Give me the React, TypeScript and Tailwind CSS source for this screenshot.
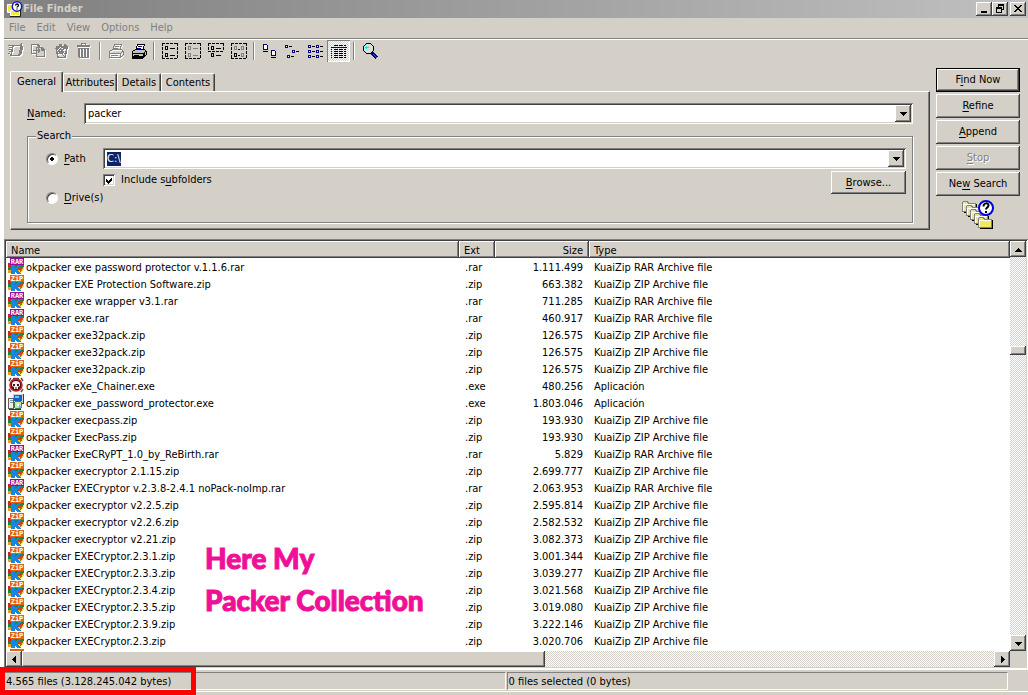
/**
 * File Finder
 * Classic search dialog with a toolbar, search form and result list
 */

import React, { useEffect, useRef } from 'react';
import { clsx } from 'clsx';

const raised = 'bg-[#d4d0c8] shadow-[inset_-1px_-1px_#404040,inset_1px_1px_#fff,inset_-2px_-2px_#808080]';
const sunken = 'shadow-[inset_1px_1px_#808080,inset_-1px_-1px_#fff,inset_2px_2px_#404040,inset_-2px_-2px_#d4d0c8]';
const checker =
  'bg-[conic-gradient(#fff_25%,#d4d0c8_0_50%,#fff_0_75%,#d4d0c8_0)] bg-[length:2px_2px]';

type FileKind = 'rar' | 'zip' | 'skull' | 'setup';

interface FileRow {
  name: string;
  size: string;
  kind: FileKind;
}

const files: FileRow[] = [
  { name: 'okpacker exe password protector v.1.1.6.rar', size: '1.111.499', kind: 'rar' },
  { name: 'okpacker EXE Protection Software.zip', size: '663.382', kind: 'zip' },
  { name: 'okpacker exe wrapper v3.1.rar', size: '711.285', kind: 'rar' },
  { name: 'okpacker exe.rar', size: '460.917', kind: 'rar' },
  { name: 'okpacker exe32pack.zip', size: '126.575', kind: 'zip' },
  { name: 'okpacker exe32pack.zip', size: '126.575', kind: 'zip' },
  { name: 'okpacker exe32pack.zip', size: '126.575', kind: 'zip' },
  { name: 'okPacker eXe_Chainer.exe', size: '480.256', kind: 'skull' },
  { name: 'okpacker exe_password_protector.exe', size: '1.803.046', kind: 'setup' },
  { name: 'okpacker execpass.zip', size: '193.930', kind: 'zip' },
  { name: 'okpacker ExecPass.zip', size: '193.930', kind: 'zip' },
  { name: 'okPacker ExeCRyPT_1.0_by_ReBirth.rar', size: '5.829', kind: 'rar' },
  { name: 'okpacker execryptor 2.1.15.zip', size: '2.699.777', kind: 'zip' },
  { name: 'okPacker EXECryptor v.2.3.8-2.4.1 noPack-noImp.rar', size: '2.063.953', kind: 'rar' },
  { name: 'okpacker execryptor v2.2.5.zip', size: '2.595.814', kind: 'zip' },
  { name: 'okpacker execryptor v2.2.6.zip', size: '2.582.532', kind: 'zip' },
  { name: 'okpacker execryptor v2.21.zip', size: '3.082.373', kind: 'zip' },
  { name: 'okpacker EXECryptor.2.3.1.zip', size: '3.001.344', kind: 'zip' },
  { name: 'okpacker EXECryptor.2.3.3.zip', size: '3.039.277', kind: 'zip' },
  { name: 'okpacker EXECryptor.2.3.4.zip', size: '3.021.568', kind: 'zip' },
  { name: 'okpacker EXECryptor.2.3.5.zip', size: '3.019.080', kind: 'zip' },
  { name: 'okpacker EXECryptor.2.3.9.zip', size: '3.222.146', kind: 'zip' },
  { name: 'okpacker EXECryptor.2.3.zip', size: '3.020.706', kind: 'zip' },
];

const typeNames: Record<FileKind, string> = {
  rar: 'KuaiZip RAR Archive file',
  zip: 'KuaiZip ZIP Archive file',
  skull: 'Aplicación',
  setup: 'Aplicación',
};

/**
 * Icons
 */
interface IconProps {
  children: React.ReactNode;
  size?: number;
  smooth?: boolean;
}

function Icon({ children, size = 16, smooth = false }: IconProps) {
  return (
    <svg
      width={size}
      height={size}
      viewBox={`0 0 ${size} ${size}`}
      fill="none"
      className="block shrink-0"
      shapeRendering={smooth ? 'auto' : 'crispEdges'}
      aria-hidden="true"
    >
      {children}
    </svg>
  );
}

// Grey drawing with a white copy one pixel down and to the right
function Etched({ children }: { children: React.ReactNode }) {
  return (
    <Icon>
      <g transform="translate(1 1)" className="text-white">{children}</g>
      <g className="text-[#808080]">{children}</g>
    </Icon>
  );
}

interface ArchiveIconProps {
  kind: 'rar' | 'zip';
  label?: string;
}

function ArchiveIcon({ kind, label }: ArchiveIconProps) {
  return (
    <Icon>
      <path d="M0 5h5v4H0z" fill="#c8281e" />
      <path d="M0 9h5v3H0z" fill="#168a36" />
      <path d="M0 12h4v3H0z" fill="#e8a020" />
      <path d="M7 7h9v2H7z" fill="#168a36" />
      <path d="M7 9h8v3H7z" fill="#d43a1c" />
      <path d="M10 12h5l-3 3h-2z" fill="#f5c42c" />
      <path d="M16 8v3l-4 5h-2v-2z" fill="#f8d850" />
      <path d="M15 10l-4 5" stroke="#a87810" />
      <path d="M3 7h4v3l3-3h3l-4 4 4 5H9l-2-3v3H3z" fill="#1686e0" />
      <path d="M2 0h14v7H2z" fill={kind === 'rar' ? '#9a0a94' : '#e4640e'} />
      {label && (
        <text
          x="9"
          y="6"
          textAnchor="middle"
          fill="#fff"
          className="font-['DejaVu_Sans_Mono'] text-[7px] font-bold"
        >
          {label}
        </text>
      )}
    </Icon>
  );
}

function SkullIcon() {
  return (
    <Icon smooth>
      <path d="M1 4l2-3M15 4l-2-3M1 12l2 3M15 12l-2 3M5 1.500h6" stroke="#555" strokeWidth="1.500" />
      <circle cx="8" cy="8" r="6" fill="#5b1018" stroke="#c81e28" strokeWidth="1.500" />
      <path d="M4 7c0-4 8-4 8 0v2l-2 1v2H6v-2L4 9z" fill="#f4f0f0" />
      <path d="M5 7h2v2H5zM9 7h2v2H9zM7.500 10h1v2h-1z" fill="#431018" />
    </Icon>
  );
}

function SetupIcon() {
  return (
    <Icon>
      <path d="M5 0h11v9H5z" fill="#d0d0d0" />
      <path d="M6 1h8v6H6z" fill="#1464c8" />
      <path d="M7 2h4v2H7z" fill="#68c8f8" />
      <path d="M15.500 0v9.500H6" stroke="#404040" />
      <path d="M.5 4.500h5v10h-5z" fill="#eee" stroke="#606060" />
      <path d="M2 6.500h3M2 8.500h3" stroke="#909090" />
      <circle cx="10" cy="11" r="4" fill="#b8e8b0" stroke="#388048" />
      <path d="M7 9l3 2 1-3z" fill="#f0f060" />
      <path d="M10 11l4 1-2 3z" fill="#58b8e8" />
      <path d="M9 10h2v2H9z" fill="#fff" />
      <path d="M1 15.500h12" stroke="#303030" />
    </Icon>
  );
}

function FileIcon({ kind }: { kind: FileKind }) {
  if (kind === 'skull') return <SkullIcon />;
  if (kind === 'setup') return <SetupIcon />;
  return <ArchiveIcon kind={kind} label={kind === 'rar' ? 'RAR' : 'ZiP'} />;
}

function AppIcon() {
  return (
    <Icon smooth>
      <path d="M.5 3.500h6v8h-6z" fill="#f4e840" stroke="#fff" />
      <path d="M3.500 9.500h9v5h-9z" fill="#f4e840" stroke="#fff" />
      <path d="M13.500 9v6.500H3" stroke="#202020" />
      <circle cx="10" cy="5.500" r="4.700" fill="#fff" stroke="#1414c8" strokeWidth="1.500" />
      <path d="M8.500 4.500c0-2 3-2 3 0 0 1-1.500 1-1.500 2M10 7.500v1" stroke="#000" strokeWidth="1.300" />
    </Icon>
  );
}

function FoldersIcon() {
  return (
    <Icon size={32}>
      {[0, 4, 8, 12, 16].map((d) => (
        <g key={d} transform={`translate(${d} ${d})`}>
          <path d="M2 12.500h12.500V4" stroke="#000" />
          <path d="M.5 11.500v-9l1-1h4l1 2h7v8z" fill={d === 16 ? '#efe860' : '#e8e4a0'} stroke="#808080" />
          <path d="M1.500 11v-6.500h11" stroke="#fff" />
        </g>
      ))}
      <g shapeRendering="auto">
        <circle cx="24" cy="8" r="7" fill="#fff" stroke="#0000e0" strokeWidth="2" />
        <path d="M21.500 6.500c0-4 5-4 5-1 0 2-2.500 2-2.500 4M24 11v2" stroke="#000" strokeWidth="2" />
      </g>
    </Icon>
  );
}

const openIcon = (
  <Etched>
    <path d="M4 2.500h8l1-1v2l-2 9H3L5 3M12.500 3.500h2l-2 9" stroke="currentColor" strokeWidth="1.500" />
    <path d="M0 2.500h4M1 4.500h3M0 6.500h3M1 8.500h2M0 10.500h2" stroke="currentColor" />
  </Etched>
);

const copyIcon = (
  <Etched>
    <path d="M.5 1.500h6l2 2v7h-8z" stroke="currentColor" strokeWidth="1.500" />
    <path d="M5.500 4.500h5l3 3v6h-8z" fill="#d4d0c8" stroke="currentColor" strokeWidth="1.500" />
    <path d="M10.500 4v3.500h3M2 7.500h7M7.500 5v5M8.500 6v3" stroke="currentColor" />
  </Etched>
);

const recycleIcon = (
  <Etched>
    <path d="M2 4.500l2 10h7l2-10" stroke="currentColor" strokeWidth="1.500" />
    <path d="M2 5l8 8M5 4l6 7M11 5l-8 7M8 4l-5 6" stroke="currentColor" />
    <path d="M2 3h3V1h3v2h2V1h2l2 3-2 2H9L7 4 4 6H2zM5 8h4v3H5z" fill="currentColor" />
  </Etched>
);

const trashIcon = (
  <Etched>
    <path d="M0 2h4V0h5v2h4v2H0zM5 1v1h3V1z" fill="currentColor" fillRule="evenodd" />
    <path d="M1 5h11v9l-1 1H2l-1-1zM3 6v8h1V6zM6 6v8h1V6zM9 6v8h1V6z" fill="currentColor" fillRule="evenodd" />
  </Etched>
);

const printerShape = 'M4.500 7.500l2-6h7l-2 6M1.500 8.500l3-2h9l2 2v3l-3 3h-11zM1 10.500h11l3-2M12.500 11v3M3 12.500h7M7 3.500h4M6 5.500h4';

const printerOffIcon = (
  <Etched>
    <path d={printerShape} stroke="currentColor" />
  </Etched>
);

const printerIcon = (
  <Icon>
    <path d="M4 7l2-6h8l-2 6z" fill="#fff" />
    <path d="M1 9l3-2h10l2 2v3l-3 3H1z" fill="#c0c0c0" />
    <path d={printerShape} stroke="#000" />
    <path d="M1 13.500h11M13.500 9v4M1 15.500h11" stroke="#000" />
    <path d="M8 3.500h3M7 5.500h3" stroke="#0000a0" />
    <path d="M8 12.500h3" stroke="#e0e000" />
  </Icon>
);

// Dashed selection frame with small file marks inside
function SelectIcon({ variant }: { variant: 'all' | 'none' | 'part' | 'invert' }) {
  const top = variant === 'none' || variant === 'invert' ? '#808080' : '#000';
  const bottom = variant === 'none' ? '#808080' : '#000';
  return (
    <Icon>
      <path
        d={variant === 'part' ? 'M0 .5h15M15.500 0v8M0 8.500h15M.5 0v8' : 'M0 .5h15M15.500 0v15M0 15.500h16M.5 0v15'}
        stroke="#000"
        strokeDasharray="3 1"
      />
      <path d="M3.500 3.500h2v3h-2z" stroke={top} />
      <path d="M3.500 10.500h2v3h-2z" stroke={bottom} />
      {variant === 'invert' ? (
        <>
          <path d="M10.500 3.500h2v3h-2z" stroke="#808080" />
          <path d="M10.500 10.500h2v3h-2z" stroke="#808080" />
          <path d="M7 6.500h2M7 12.500h2" stroke="#000" />
        </>
      ) : (
        <>
          <path d="M8 5.500h5" stroke={top} />
          <path d="M8 12.500h5" stroke={bottom} />
        </>
      )}
    </Icon>
  );
}

const largeIconsIcon = (
  <Icon>
    <path d="M1.500 1.500h3l1 1v4h-4zM9.500 7.500h3l1 1v4h-4z" fill="#fff" stroke="#000080" />
    <path d="M1 8.500h5M9 14.500h5" stroke="#000" />
  </Icon>
);

const smallIconsIcon = (
  <Icon>
    <path d="M.5 2.500h2v2h-2zM7.500 7.500h2v2h-2zM2.500 12.500h2v2h-2z" fill="#fff" stroke="#000080" />
    <path d="M4 3.500h3M11 8.500h3M6 13.500h3" stroke="#000" />
  </Icon>
);

const listIcon = (
  <Icon>
    <path
      d="M.5 2.500h2v2h-2zM8.500 2.500h2v2h-2zM.5 7.500h2v2h-2zM8.500 7.500h2v2h-2zM.5 12.500h2v2h-2zM8.500 12.500h2v2h-2z"
      fill="#fff"
      stroke="#000080"
    />
    <path d="M4 3.500h3M12 3.500h3M4 8.500h3M12 8.500h3M4 13.500h3M12 13.500h3" stroke="#000" />
  </Icon>
);

const detailsIcon = (
  <Icon>
    <path d="M3 2.500h12M3 6.500h12M3 8.500h12M3 10.500h12M3 12.500h12M3 14.500h12" stroke="#000" strokeDasharray="4 1" />
    <path d="M0 4.500h16" stroke="#000080" />
    <path d="M.5 6v10" stroke="#000080" strokeDasharray="1 1" />
  </Icon>
);

const searchIcon = (
  <Icon>
    <path d="M4.500.5h4l3 3v4l-3 3h-4l-3-3v-4z" fill="#dcdcd8" stroke="#000" />
    <path d="M3 4.500h4M4.500 3v3" stroke="#00e8f0" />
    <path d="M10 10l5 5" stroke="#000080" strokeWidth="3" />
    <path d="M11 11l4 4" stroke="#5050d0" />
  </Icon>
);

interface ArrowProps {
  dir: 'up' | 'down' | 'left' | 'right';
}

const arrowPaths = {
  up: 'M3 2h1v1h1v1h1v1h1v1H0V5h1V4h1V3h1z',
  down: 'M0 2h7v1H6v1H5v1H4v1H3V5H2V4H1V3H0z',
  left: 'M1 3h1V2h1V1h1V0h1v7H4V6H3V5H2V4H1z',
  right: 'M2 0h1v1h1v1h1v1h1v1H5v1H4v1H3v1H2z',
};

function Arrow({ dir }: ArrowProps) {
  return (
    <Icon size={7}>
      <path d={arrowPaths[dir]} fill="#000" />
    </Icon>
  );
}

/**
 * Title bar and menu
 */
function TitleBar() {
  const box = clsx('flex h-3.5 w-4 items-center justify-center', raised);
  return (
    <header className="flex h-[18px] items-center bg-linear-to-r from-[#808080] to-[#c0c0c0] pl-[3px] pr-0.5">
      <AppIcon />
      <h1 className="flex-1 text-[11px] font-bold leading-[18px] text-[#d4d0c8]">File Finder</h1>
      <button type="button" aria-label="Minimize" className={box}>
        <Icon size={10}><path d="M2 7h6v2H2z" fill="#000" /></Icon>
      </button>
      <button type="button" aria-label="Restore" className={box}>
        <Icon size={10}>
          <path d="M3 1h6M3 .5h6M3.500 0v4M8.500 0v6M7 5.500h2M1 3.500h6M1 4.500h6M1.500 4v5M6.500 4v5M1 8.500h6" stroke="#000" />
        </Icon>
      </button>
      <button type="button" aria-label="Close" className={clsx(box, 'ml-0.5')}>
        <Icon size={10}>
          <path d="M1 1h2v1h1v1h2V2h1V1h2v1H8v1H7v1H6v1h1v1h1v1h1v1H7V7H6V6H4v1H3v1H1V7h1V6h1V5h1V4H3V3H2V2H1z" fill="#000" />
        </Icon>
      </button>
    </header>
  );
}

function MenuBar() {
  return (
    <nav className="flex h-[21px] items-center gap-[11px] border-b border-[#808080] pl-[5px] text-[#808080]">
      {['File', 'Edit', 'View', 'Options', 'Help'].map((item) => (
        <button key={item} type="button" className="leading-4">{item}</button>
      ))}
    </nav>
  );
}

/**
 * Toolbar
 */
interface ToolProps {
  label: string;
  icon: React.ReactNode;
  pressed?: boolean;
}

function Tool({ label, icon, pressed }: ToolProps) {
  return (
    <button
      type="button"
      aria-label={label}
      aria-pressed={pressed}
      className={clsx(
        'flex h-[22px] w-[23px] items-center pl-1',
        pressed && checker,
        pressed && 'shadow-[inset_1px_1px_#808080,inset_-1px_-1px_#fff]'
      )}
    >
      {icon}
    </button>
  );
}

function Separator() {
  return <div className="mx-[3px] mt-0.5 h-[18px] w-0.5 border-l border-r border-l-[#808080] border-r-white" />;
}

function Toolbar() {
  return (
    <div className="flex h-6 items-start border-t border-white">
      <Tool label="Open" icon={openIcon} />
      <Tool label="Copy" icon={copyIcon} />
      <Tool label="Recycle" icon={recycleIcon} />
      <Tool label="Delete" icon={trashIcon} />
      <Separator />
      <Tool label="Print" icon={printerOffIcon} />
      <Tool label="Print list" icon={printerIcon} />
      <Separator />
      <Tool label="Select all" icon={<SelectIcon variant="all" />} />
      <Tool label="Select none" icon={<SelectIcon variant="none" />} />
      <Tool label="Select part" icon={<SelectIcon variant="part" />} />
      <Tool label="Invert selection" icon={<SelectIcon variant="invert" />} />
      <Separator />
      <Tool label="Large icons" icon={largeIconsIcon} />
      <Tool label="Small icons" icon={smallIconsIcon} />
      <Tool label="List" icon={listIcon} />
      <Tool label="Details" icon={detailsIcon} pressed />
      <Separator />
      <Tool label="Find" icon={searchIcon} />
    </div>
  );
}

/**
 * Search form
 */
interface ComboProps {
  id: string;
  value: string;
  label?: string;
  selected?: boolean;
}

function Combo({ id, value, label, selected }: ComboProps) {
  const ref = useRef<HTMLInputElement>(null);

  useEffect(() => {
    if (selected) ref.current?.select();
  }, [selected]);

  return (
    <div className={clsx('flex h-[21px] flex-1 bg-white p-0.5', sunken)}>
      <input
        ref={ref}
        id={id}
        aria-label={label}
        defaultValue={value}
        autoFocus={selected}
        spellCheck={false}
        className="min-w-0 flex-1 px-0.5 outline-none selection:bg-[#0a246a] selection:text-white"
      />
      <button type="button" aria-label="Show list" className={clsx('flex w-4 items-center justify-center', raised)}>
        <Arrow dir="down" />
      </button>
    </div>
  );
}

function Radio({ id, checked }: { id: string; checked?: boolean }) {
  return (
    <input
      type="radio"
      name="scope"
      id={id}
      defaultChecked={checked}
      className="size-3 appearance-none rounded-full border border-t-[#808080] border-l-[#808080] border-r-white border-b-white bg-white shadow-[inset_1px_1px_#404040] checked:bg-[radial-gradient(#000_2px,#fff_2px)]"
    />
  );
}

const tabs = [
  { label: 'Attributes', width: 'w-[54px]' },
  { label: 'Details', width: 'w-11' },
  { label: 'Contents', width: 'w-[54px]' },
];

const tabEdge = 'rounded-t-xs border-t border-l border-r border-t-white border-l-white border-r-[#404040] bg-[#d4d0c8] shadow-[inset_-1px_0_#808080]';

function SearchTabs() {
  return (
    <div className="flex-1 pt-2">
      <div role="tablist" className="flex items-end">
        <button type="button" role="tab" aria-selected="true" className={clsx('relative -mb-px h-[21px] w-[53px]', tabEdge)}>
          General
        </button>
        {tabs.map((tab) => (
          <button key={tab.label} type="button" role="tab" aria-selected="false" className={clsx('h-[18px]', tab.width, tabEdge)}>
            {tab.label}
          </button>
        ))}
      </div>
      <div className="border border-t-white border-l-white border-r-[#404040] border-b-[#404040] px-4 pt-[11px] pb-1.5 shadow-[inset_-1px_-1px_#808080]">
        <div className="flex items-center">
          <label htmlFor="named" className="w-[57px]"><u>N</u>amed:</label>
          <Combo id="named" value="packer" />
        </div>
        <fieldset className="mt-[5px] border border-[#808080] pr-1.5 pb-[15px] pl-2 shadow-[1px_1px_#fff,inset_1px_1px_#fff]">
          <legend className="relative bg-[#d4d0c8] px-px">Search</legend>
          <div className="flex items-center pt-[5px] pl-2.5">
            <div className="flex w-[57px] items-center gap-1.5">
              <Radio id="path" checked />
              <label htmlFor="path"><u>P</u>ath</label>
            </div>
            <Combo id="path-value" label="Search path" value="C:\" selected />
          </div>
          <div className="flex items-start justify-between pt-0.5 pl-2.5">
            <div>
              <div className="ml-[57px] flex h-[18px] items-center gap-1.5">
                <div className="relative">
                  <input type="checkbox" id="subfolders" defaultChecked className={clsx('block size-3 appearance-none bg-white', sunken)} />
                  <svg width="12" height="12" viewBox="0 0 12 12" className="pointer-events-none absolute inset-0" aria-hidden="true">
                    <path d="M3 5l2 2 4-4v3L5 10 3 8z" fill="#000" shapeRendering="crispEdges" />
                  </svg>
                </div>
                <label htmlFor="subfolders">Include s<u>u</u>bfolders</label>
              </div>
              <div className="flex h-[18px] items-center gap-1.5">
                <Radio id="drives" />
                <label htmlFor="drives"><u>D</u>rive(s)</label>
              </div>
            </div>
            <button type="button" className={clsx('h-[23px] w-[75px]', raised)}><u>B</u>rowse...</button>
          </div>
        </fieldset>
      </div>
    </div>
  );
}

function SearchActions() {
  const base = clsx('h-6 w-full', raised);
  return (
    <div className="flex w-[84px] flex-col items-center gap-0.5 pt-[5px]">
      <button
        type="button"
        className="h-6 w-full border border-black bg-[#d4d0c8] shadow-[inset_-1px_-1px_#404040,inset_1px_1px_#fff,inset_-2px_-2px_#808080]"
      >
        F<u>i</u>nd Now
      </button>
      <button type="button" className={base}><u>R</u>efine</button>
      <button type="button" className={base}><u>A</u>ppend</button>
      <button type="button" disabled className={clsx(base, 'text-[#808080] text-shadow-[1px_1px_#fff]')}><u>S</u>top</button>
      <button type="button" className={base}>Ne<u>w</u> Search</button>
      <div className="pt-0.5"><FoldersIcon /></div>
    </div>
  );
}

/**
 * Result list
 */
function ResultTable() {
  const th = clsx('h-[17px] pt-0.5 pb-0 leading-[15px] font-normal', raised);
  const td = 'p-0 pt-0.5 leading-[15px]';
  return (
    <table className="w-full table-fixed border-collapse text-left whitespace-nowrap">
      <colgroup>
        <col className="w-[453px]" />
        <col className="w-9" />
        <col className="w-[94px]" />
        <col />
      </colgroup>
      <thead>
        <tr>
          <th className={clsx(th, 'pl-[5px]')}>Name</th>
          <th className={clsx(th, 'pl-[5px]')}>Ext</th>
          <th className={clsx(th, 'pr-1.5 text-right')}>Size</th>
          <th className={clsx(th, 'pl-[5px]')}>Type</th>
        </tr>
      </thead>
      <tbody>
        {files.map((file, i) => (
          <tr key={i} className="h-[17px]">
            <td className="p-0 pl-0.5">
              <div className="flex h-[17px] items-start gap-0.5">
                <FileIcon kind={file.kind} />
                <span className="pt-0.5 leading-[15px]">{file.name}</span>
              </div>
            </td>
            <td className={clsx(td, 'pl-1.5')}>{file.name.slice(-4)}</td>
            <td className={clsx(td, 'pr-1.5 text-right')}>{file.size}</td>
            <td className={clsx(td, 'pl-[5px]')}>{typeNames[file.kind]}</td>
          </tr>
        ))}
        <tr>
          <td className="p-0 pl-0.5"><ArchiveIcon kind="zip" /></td>
        </tr>
      </tbody>
    </table>
  );
}

function ResultList() {
  const button = clsx('flex size-4 shrink-0 items-center justify-center', raised);
  return (
    <main className={clsx('flex min-h-0 flex-1 flex-col p-0.5', sunken)}>
      <div className="flex min-h-0 flex-1">
        <div className="relative min-w-0 flex-1 overflow-hidden bg-white">
          <ResultTable />
          <p className="absolute top-[296px] left-[199px] font-[Lato] text-[28px] leading-[42px] font-black text-[#f01098] [-webkit-text-stroke:1px_#f01098]">
            Here My
            <br />
            Packer Collection
          </p>
        </div>
        <div className={clsx('flex w-4 flex-col', checker)}>
          <button type="button" aria-label="Scroll up" className={button}><Arrow dir="up" /></button>
          <div className="flex-[89]" />
          <div className={clsx('h-[9px]', raised)} />
          <div className="flex-[281]" />
          <button type="button" aria-label="Scroll down" className={button}><Arrow dir="down" /></button>
        </div>
      </div>
      <div className="flex h-4 shrink-0 pr-4">
        <button type="button" aria-label="Scroll left" className={button}><Arrow dir="left" /></button>
        <div className={clsx('flex-[523]', raised)} />
        <div className={clsx('flex-[449]', checker)} />
        <button type="button" aria-label="Scroll right" className={button}><Arrow dir="right" /></button>
      </div>
    </main>
  );
}

function StatusBar() {
  const pane = 'h-[18px] border border-t-[#808080] border-l-[#808080] border-r-white border-b-white pl-px leading-[18px]';
  return (
    <footer className="relative h-[26px] border-t border-white pt-0.5 pr-5">
      <div className="flex gap-px">
        <div className={clsx('flex-1', pane)}>4.565 files (3.128.245.042 bytes)</div>
        <div className={clsx('flex-1', pane)}>0 files selected (0 bytes)</div>
      </div>
      <div className="-mr-5 mt-px border-t border-white" />
      <div className="absolute -top-[3px] -left-1 h-7 w-[196px] border-5 border-[#f00]" />
    </footer>
  );
}

export default function App() {
  return (
    <div className="h-screen bg-white pl-1">
      <div className="flex h-full flex-col bg-[#d4d0c8] font-['DejaVu_Sans_Condensed','Noto_Sans',sans-serif] text-[11px] leading-[14px] text-black [&_u]:underline-offset-2">
        <TitleBar />
        <MenuBar />
        <Toolbar />
        <div className="flex gap-1.5 pr-2 pb-[7px] pl-1.5">
          <SearchTabs />
          <SearchActions />
        </div>
        <ResultList />
        <StatusBar />
      </div>
    </div>
  );
}
